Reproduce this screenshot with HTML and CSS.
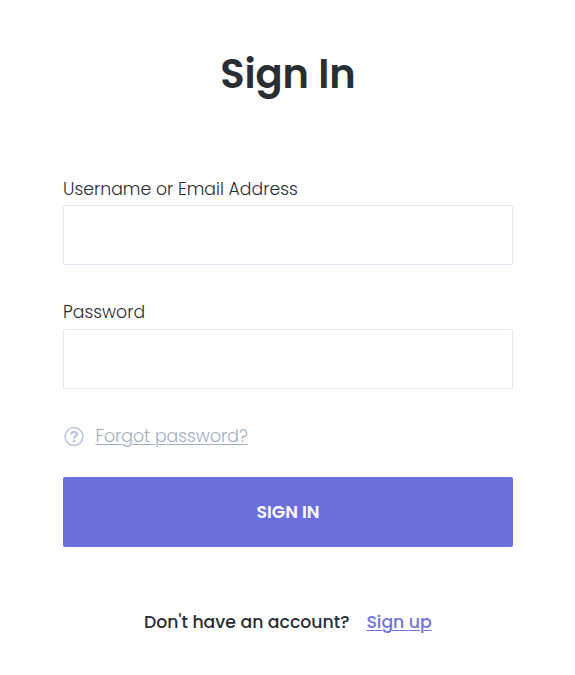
FILE: index.html
```html
<!DOCTYPE html>
<html lang="en">
<head>
<meta charset="utf-8">
<meta name="viewport" content="width=device-width, initial-scale=1">
<title>Sign In</title>
<link rel="stylesheet" href="styles.css">
</head>
<body>
<main class="signin">
  <h1 class="title">Sign In</h1>
  <form class="form">
    <label class="label" for="user">Username or Email Address</label>
    <input class="field" id="user" type="text">
    <label class="label label-pass" for="pass">Password</label>
    <input class="field" id="pass" type="password">
    <div class="forgot">
      <svg class="help" viewBox="0 0 20 20" fill="none" stroke="#c1c9df" aria-hidden="true">
        <circle cx="10" cy="9.6" r="8.9" stroke-width="1.8"/>
        <path d="M7.1 7.6C7.3 5.8 8.4 5 10.1 5s2.8.9 2.8 2.3c0 2.1-2.8 1.9-2.8 4.1" stroke-width="2.5"/>
        <circle cx="10" cy="14" r="1.5" fill="#c1c9df" stroke="none"/>
      </svg>
      <a class="forgot-link" href="#">Forgot password?</a>
    </div>
    <button class="submit" type="button">SIGN IN</button>
  </form>
  <p class="signup"><span class="question">Don't have an account?</span><a class="signup-link" href="#">Sign up</a></p>
</main>
</body>
</html>
```

FILE: styles.css
```css
* { box-sizing: border-box; }
body {
  margin: 0;
  background: #fff;
  color: #292d34;
  font-family: Poppins, Inter, sans-serif;
}
.signin { width: 450px; margin-left: 63px; padding-top: 44px; }
.title {
  margin: 0;
  height: 60px;
  line-height: 60px;
  font-size: 40px;
  font-weight: 600;
  letter-spacing: -0.1px;
  text-align: center;
}
.form { display: flex; flex-direction: column; margin-top: 72px; }
.label {
  height: 29px;
  line-height: 27px;
  font-size: 17.28px;
  font-weight: 300;
}
.label-pass { height: 30px; margin-top: 34px; }
.field {
  width: 450px;
  height: 60px;
  padding: 0 20px;
  border: 1px solid #e3e7f4;
  border-radius: 2px;
  background: #fff;
  font: inherit;
  outline: none;
}
.forgot { display: flex; align-items: center; height: 30px; margin-top: 32px; }
.help { width: 20px; height: 20px; margin: 1px 11.4px 0 1px; overflow: visible; }
.forgot-link {
  height: 28px;
  line-height: 28px;
  color: #a3acbf;
  font-size: 17.3px;
  font-weight: 300;
  text-underline-offset: 2px;
  text-decoration-thickness: 1px;
}
.submit {
  height: 70px;
  margin-top: 26px;
  padding: 0;
  border: 0;
  border-radius: 2px;
  background: #6b70dc;
  color: #fff;
  font-family: inherit;
  font-size: 17.3px;
  font-weight: 600;
}
.signup {
  display: flex;
  height: 30px;
  margin: 60px 0 0 81px;
  line-height: 30px;
  font-size: 17.3px;
  font-weight: 500;
  white-space: nowrap;
}
.question { width: 222.4px; }
.signup-link {
  color: #7074df;
  text-underline-offset: 2px;
  text-decoration-thickness: 1px;
}
```
